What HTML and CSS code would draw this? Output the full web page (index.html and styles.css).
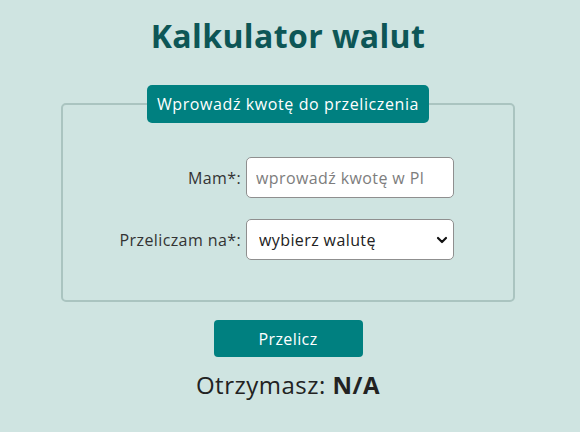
FILE: index.html
```html
<!DOCTYPE html>
<html lang="pl">
<head>
<meta charset="utf-8">
<title>Kalkulator walut</title>
<link rel="stylesheet" href="styles.css">
</head>
<body>
<main class="page">
  <h1 class="title">Kalkulator walut</h1>
  <form class="form">
    <fieldset class="box">
      <legend class="legend">Wprowadź kwotę do przeliczenia</legend>
      <div class="rows">
        <label class="label" for="amount">Mam*:</label>
        <input class="field" id="amount" type="text" placeholder="wprowadź kwotę w Pl">
        <label class="label" for="currency">Przeliczam na*:</label>
        <div class="select-wrap">
          <select class="field select" id="currency">
            <option>wybierz walutę</option>
          </select>
          <svg class="chev" width="12" height="8" viewBox="0 0 12 8"><path d="M2 2 L6 6 L10 2" fill="none" stroke="#111" stroke-width="2.2" stroke-linecap="round" stroke-linejoin="round"/></svg>
        </div>
      </div>
    </fieldset>
    <button class="btn" type="button">Przelicz</button>
    <p class="result">Otrzymasz: <strong>N/A</strong></p>
  </form>
</main>
</body>
</html>
```
FILE: styles.css
```css
* { box-sizing: border-box; }
html, body { margin: 0; padding: 0; }
body {
  background: #cfe4e1;
  font-family: "Open Sans", "DejaVu Sans", sans-serif;
  color: #222;
  width: 576px;
}
.page {
  display: flex;
  flex-direction: column;
  align-items: center;
  padding-top: 14px;
}
.title {
  margin: 0;
  font-size: 32px;
  line-height: 44px;
  font-weight: 700;
  color: #0d5656;
  letter-spacing: 0.4px;
}
.form {
  display: flex;
  flex-direction: column;
  align-items: center;
  margin-top: 27px;
}
.box {
  width: 454px;
  height: 217px;
  margin: 0;
  padding: 0;
  border: 2px solid #aac4c0;
  border-radius: 5px;
}
.legend {
  margin: 0 auto;
  padding: 0 8px;
  height: 38px;
  width: 282px;
  display: flex;
  align-items: center;
  justify-content: center;
  background: #008080;
  color: #fff;
  border-radius: 5px;
  font-size: 16px;
  letter-spacing: 0.6px;
}
.rows {
  display: grid;
  grid-template-columns: 178px 208px;
  column-gap: 5px;
  row-gap: 21px;
  align-items: center;
  padding-top: 34px;
}
.label {
  text-align: right;
  font-size: 16px;
  color: #333;
  letter-spacing: 0.4px;
}
.field {
  width: 208px;
  height: 41px;
  border: 1px solid #8f8f8f;
  border-radius: 5px;
  background: #fff;
  font-family: inherit;
  font-size: 16px;
  padding: 0 9px;
  color: #222;
  letter-spacing: 0.4px;
}
.field::placeholder { color: #7d7d7d; }
.select-wrap { position: relative; width: 208px; height: 41px; }
.select {
  appearance: none;
  -webkit-appearance: none;
  padding-left: 12px;
}
.chev { position: absolute; right: 6px; top: 17px; pointer-events: none; }
.btn {
  margin-top: 18px;
  width: 149px;
  height: 37px;
  border: none;
  border-radius: 4px;
  background: #008080;
  color: #fff;
  font-family: inherit;
  font-size: 16px;
  letter-spacing: 0.4px;
}
.result {
  margin: 12px 0 0;
  font-size: 24px;
  line-height: 32px;
  color: #222;
  letter-spacing: 0.5px;
}
.result strong { font-weight: 700; }
```
